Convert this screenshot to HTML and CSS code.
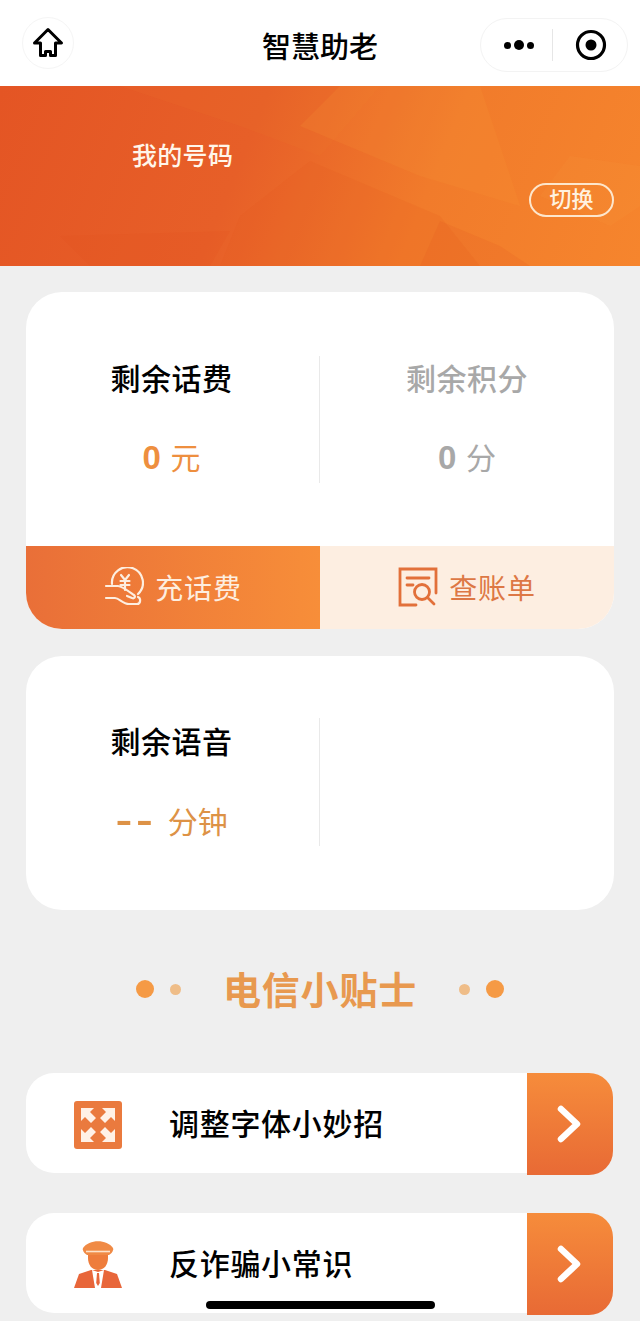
FILE: index.html
```html
<!DOCTYPE html>
<html lang="zh-CN">
<head>
    <meta charset="UTF-8">
    <title>智慧助老</title>
    <link rel="stylesheet" href="styles.css">
</head>
<body>
<div class="page">
    <!-- 顶部导航 -->
    <header class="nav">
        <div class="nav-left">
            <span class="home-btn">
                <svg width="32" height="32" viewBox="0 0 32 32">
                    <path d="M16 2.500 L29.500 16 H23.500 V28.500 H18.500 V24.500 H13.500 V28.500 H8.500 V16 H2.500 Z" fill="none" stroke="#000" stroke-width="3" stroke-linejoin="round"/>
                </svg>
            </span>
        </div>
        <h1 class="nav-title">智慧助老</h1>
        <div class="nav-right">
            <div class="capsule">
                <span class="capsule-dots"><i></i><i class="mid"></i><i></i></span>
                <span class="capsule-line"></span>
                <svg width="32" height="32" viewBox="0 0 32 32">
                    <circle cx="16" cy="16" r="13.500" fill="none" stroke="#000" stroke-width="3.200"/>
                    <circle cx="16" cy="16" r="5.500" fill="#000"/>
                </svg>
            </div>
        </div>
    </header>

    <!-- 号码横幅 -->
    <section class="banner">
        <svg class="banner-bg" width="640" height="180" viewBox="0 0 640 180">
            <polygon points="120,0 380,0 320,70 240,40" fill="#f58a30" opacity="0.08"/>
            <polygon points="340,0 480,0 520,120 420,90 300,40" fill="#f89a3a" opacity="0.16"/>
            <polygon points="570,70 640,80 640,120 610,140 540,110" fill="#f9a040" opacity="0.12"/>
            <polygon points="310,75 440,130 480,180 220,180 240,130" fill="#e2521f" opacity="0.14"/>
            <polygon points="440,135 500,160 530,180 420,180" fill="#e5561f" opacity="0.18"/>
            <polygon points="60,150 230,145 210,180 90,180" fill="#e04e1c" opacity="0.14"/>
        </svg>
        <div class="banner-label">我的号码</div>
        <span class="switch-btn">切换</span>
    </section>

    <!-- 话费积分卡片 -->
    <section class="card card-money">
        <div class="stats">
            <div class="stat stat-first">
                <div class="stat-label">剩余话费</div>
                <div class="stat-value"><b>0</b> 元</div>
            </div>
            <div class="stat stat-grey">
                <div class="stat-label">剩余积分</div>
                <div class="stat-value"><b>0</b> 分</div>
            </div>
        </div>
        <div class="actions">
            <a class="action action-pay" href="#">
                <svg width="40" height="40" viewBox="0 0 40 40" fill="none" stroke="#fdeee0" stroke-width="2.200" stroke-linecap="round" stroke-linejoin="round">
                    <path d="M8 17 A15.500 15.500 0 1 1 34 27"/>
                    <path d="M2 19 H14 C18 19 27 26 30 28 C32 30 30 32 28 31 L23 29"/>
                    <path d="M2 31 H11 C15 31 19 37 25 37 H33 C37 37 37 31 34 30"/>
                    <path d="M17 8 L21 13 L25 8 M21 13 V23 M16.500 14 H25.500 M16.500 18 H25.500"/>
                </svg>
                <span>充话费</span>
            </a>
            <a class="action action-bill" href="#">
                <svg width="40" height="40" viewBox="0 0 40 40" fill="none" stroke="#e2703a" stroke-width="2.800" stroke-linecap="round">
                    <path d="M18 38 H2 V2 H38 V26"/>
                    <path d="M9 11 H31 M9 18 H15"/>
                    <circle cx="24" cy="25" r="7.500"/>
                    <path d="M29.500 30.500 L36 37"/>
                </svg>
                <span>查账单</span>
            </a>
        </div>
    </section>

    <!-- 语音卡片 -->
    <section class="card card-voice">
        <div class="stats stats-voice">
            <div class="stat stat-first">
                <div class="stat-label">剩余语音</div>
                <div class="stat-value stat-value-voice"><b>--</b> 分钟</div>
            </div>
            <div class="stat"></div>
        </div>
    </section>

    <!-- 电信小贴士 -->
    <div class="tips-title">
        <i class="dot-big"></i><i class="dot-small"></i>
        <h2>电信小贴士</h2>
        <i class="dot-small"></i><i class="dot-big"></i>
    </div>

    <div class="tip-row">
        <span class="tip-icon">
            <svg width="48" height="48" viewBox="0 0 48 48">
                <rect width="48" height="48" rx="3" fill="#ea7a3e"/>
                <g fill="#fff1e6">
                    <polygon points="7,7 20,7 16,11 22,17 17,22 11,16 7,20"/>
                    <polygon points="41,7 28,7 32,11 26,17 31,22 37,16 41,20"/>
                    <polygon points="7,41 20,41 16,37 22,31 17,26 11,32 7,28"/>
                    <polygon points="41,41 28,41 32,37 26,31 31,26 37,32 41,28"/>
                </g>
            </svg>
        </span>
        <span class="tip-text">调整字体小妙招</span>
        <span class="tip-arrow"><svg width="26" height="38" viewBox="0 0 26 38"><path d="M4 4 L20 19 L4 34" fill="none" stroke="#fff" stroke-width="6.500" stroke-linecap="round" stroke-linejoin="round"/></svg></span>
    </div>

    <div class="tip-row tip-row-last">
        <span class="tip-icon">
            <svg width="48" height="48" viewBox="0 0 48 48">
                <path d="M9 7 C15 -2 33 -2 39 7 C40 10 37 13 35 14 H13 C11 13 8 10 9 7 Z" fill="#f08a45"/>
                <path d="M12 10.500 H36" stroke="#fde3cb" stroke-width="1.600"/>
                <path d="M14 14 H34 V17 C34 24 30 29 24 29 C18 29 14 24 14 17 Z" fill="#ee7d3c"/>
                <path d="M5 33 L17 29 H31 L43 33 L48 47 H0 Z" fill="#e8663a"/>
                <path d="M18 29 L24 31 L30 29 L27 47 H21 Z" fill="#fff"/>
                <path d="M23 32 H25 L25.800 42 L24 45 L22.200 42 Z" fill="#e8663a"/>
            </svg>
        </span>
        <span class="tip-text">反诈骗小常识</span>
        <span class="tip-arrow"><svg width="26" height="38" viewBox="0 0 26 38"><path d="M4 4 L20 19 L4 34" fill="none" stroke="#fff" stroke-width="6.500" stroke-linecap="round" stroke-linejoin="round"/></svg></span>
    </div>

    <!-- 底部横条 -->
    <div class="home-bar"></div>
</div>
</body>
</html>
```

FILE: styles.css
```css
/* 重置样式 */
* {
    margin: 0;
    padding: 0;
    box-sizing: border-box;
}

body {
    font-family: "Noto Sans CJK SC", "Noto Sans", sans-serif;
    background: #efefef;
    color: #000;
}

.page {
    position: relative;
    width: 640px;
    height: 1321px;
    overflow: hidden;
    background: #efefef;
}

/* 顶部导航 */
.nav {
    display: grid;
    grid-template-columns: 1fr auto 1fr;
    align-items: center;
    height: 86px;
    padding: 8px 12px 4px;
    background: #fff;
}

.nav-title {
    font-size: 29px;
    font-weight: 500;
    line-height: 40px;
}

.nav-right {
    display: flex;
    justify-content: flex-end;
}

.home-btn {
    display: flex;
    align-items: center;
    justify-content: center;
    width: 52px;
    height: 52px;
    margin: -4px 0 0 10px;
    border: 1px solid #f5f5f5;
    border-radius: 50%;
}

.capsule {
    display: flex;
    align-items: center;
    width: 148px;
    height: 54px;
    padding-left: 23px;
    border: 1px solid #f3f3f3;
    border-radius: 27px;
}

.capsule-dots {
    display: flex;
    align-items: center;
    gap: 3px;
}

.capsule-dots i {
    width: 7px;
    height: 7px;
    border-radius: 50%;
    background: #000;
}

.capsule-dots i.mid {
    width: 10px;
    height: 10px;
}

.capsule-line {
    width: 1px;
    height: 32px;
    margin: 0 22px 0 18px;
    background: #e6e6e6;
}

/* 号码横幅 */
.banner {
    position: relative;
    display: flex;
    flex-direction: column;
    height: 180px;
    overflow: hidden;
    background: linear-gradient(112deg, #e45524 0%, #e75f28 38%, #f17b2b 66%, #f6852d 100%);
}

.banner-bg {
    position: absolute;
    top: 0;
    left: 0;
}

.banner-label {
    position: relative;
    margin: 51px 0 0 132px;
    font-size: 25px;
    font-weight: 500;
    line-height: 34px;
    letter-spacing: 0.3px;
    color: #fff6ea;
}

.switch-btn {
    position: relative;
    align-self: flex-end;
    width: 85px;
    height: 34px;
    margin: 12px 26px 0 0;
    border: 2px solid #fde6cc;
    border-radius: 17px;
    font-size: 22px;
    font-weight: 500;
    line-height: 24px;
    text-align: center;
    color: #fff1df;
}

/* 卡片 */
.card {
    margin: 0 26px;
    overflow: hidden;
    background: #fff;
    border-radius: 36px;
}

.card-money {
    margin-top: 26px;
}

.card-voice {
    height: 254px;
    margin-top: 27px;
}

.stats {
    display: flex;
    height: 254px;
    padding-top: 64px;
    padding-bottom: 63px;
}

.stats-voice {
    padding-top: 62px;
    padding-bottom: 64px;
}

.stats-voice .stat-label {
    margin-top: 1px;
}

.stats-voice .stat-value {
    margin-top: 38px;
}

.stat {
    flex: 1;
    text-align: center;
}

.stat-first {
    flex: none;
    width: 294px;
    padding-right: 2px;
    border-right: 1px solid #e9e9e9;
}

.stat-label {
    font-size: 30px;
    font-weight: 500;
    line-height: 42px;
    letter-spacing: 0.5px;
}

.stat-value {
    margin-top: 37px;
    font-size: 30px;
    line-height: 42px;
    color: #ee8f3f;
}

.stat-value b {
    margin-right: 3px;
    font-family: "Liberation Sans", sans-serif;
    font-size: 33px;
    font-weight: 700;
}

.stat-value-voice {
    color: #dd9246;
}

.stat-value-voice b {
    margin-right: 5px;
    font-size: 52px;
    font-weight: 400;
    line-height: 0;
    letter-spacing: 3px;
    vertical-align: -4px;
}

.stat-grey .stat-label,
.stat-grey .stat-value {
    color: #a8a8a8;
}

/* 充值和账单按钮 */
.actions {
    display: flex;
    height: 83px;
}

.action {
    flex: 1;
    display: flex;
    align-items: center;
    justify-content: center;
    gap: 11px;
    padding-bottom: 2px;
    font-size: 28px;
    letter-spacing: 0.8px;
    text-decoration: none;
}

.action-pay {
    background: linear-gradient(90deg, #e96f38, #f78e39);
    color: #fdeee0;
}

.action-bill {
    background: #fdeee1;
    color: #dd7845;
}

/* 电信小贴士 */
.tips-title {
    display: flex;
    align-items: center;
    justify-content: center;
    height: 54px;
    margin-top: 52px;
}

.tips-title h2 {
    margin: 0 26px;
    padding-bottom: 3px;
    font-size: 38px;
    font-weight: 700;
    line-height: 50px;
    letter-spacing: 0.8px;
    color: #e8994f;
}

.dot-big {
    width: 18px;
    height: 18px;
    border-radius: 50%;
    background: #f59a45;
}

.dot-small {
    width: 11px;
    height: 11px;
    margin: 0 16px;
    border-radius: 50%;
    background: #efbd88;
}

.tip-row {
    display: flex;
    align-items: flex-start;
    height: 100px;
    margin: 57px 27px 0 26px;
    background: #fff;
    border-radius: 28px;
}

.tip-row-last {
    margin-top: 40px;
}

.tip-icon {
    display: flex;
    width: 48px;
    height: 48px;
    margin: 28px 48px 0 48px;
}

.tip-text {
    flex: 1;
    margin-left: -1px;
    font-size: 30px;
    font-weight: 500;
    line-height: 98px;
    letter-spacing: 0.7px;
}

.tip-arrow {
    display: flex;
    align-items: center;
    justify-content: center;
    width: 86px;
    height: 102px;
    background: linear-gradient(180deg, #f68c3b, #e86a35);
    border-radius: 0 24px 24px 0;
}

/* 底部横条 */
.home-bar {
    position: absolute;
    left: 206px;
    top: 1301px;
    width: 229px;
    height: 8px;
    border-radius: 4px;
    background: #000;
}
```
